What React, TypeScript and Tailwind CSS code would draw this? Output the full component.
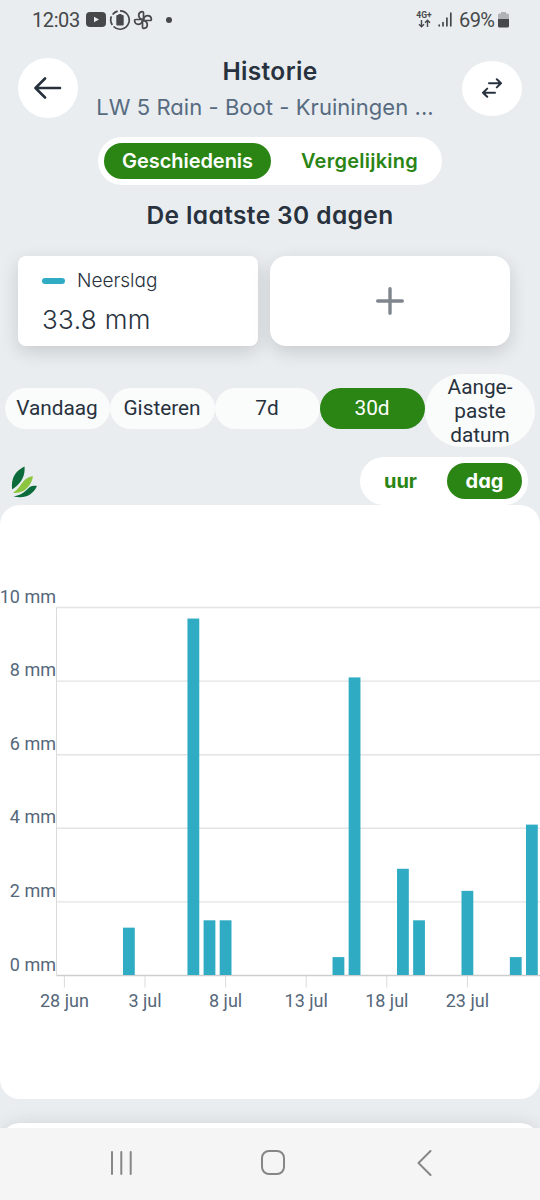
import clsx from "clsx";

const CHART = { left: 56.5, top: 102.5, bottom: 470.5, width: 540, firstDay: 64.4, dayStep: 16.12, barWidth: 11.8 };
const MM = (CHART.bottom - CHART.top) / 10;

// day = days since 28 jun
const RAIN = [
  { day: 4, mm: 1.3 },
  { day: 8, mm: 9.7 },
  { day: 9, mm: 1.5 },
  { day: 10, mm: 1.5 },
  { day: 17, mm: 0.5 },
  { day: 18, mm: 8.1 },
  { day: 21, mm: 2.9 },
  { day: 22, mm: 1.5 },
  { day: 25, mm: 2.3 },
  { day: 28, mm: 0.5 },
  { day: 29, mm: 4.1 },
];

const TICKS = ["28 jun", "3 jul", "8 jul", "13 jul", "18 jul", "23 jul"];

const RANGES = [
  { label: "Vandaag", width: "w-[105px]" },
  { label: "Gisteren", width: "w-[105px]" },
  { label: "7d", width: "w-[105px]" },
  { label: "30d", width: "w-[105px]", active: true },
];

const UI = "font-['Inter',sans-serif] [font-feature-settings:'cv11']";

function StatusBar() {
  return (
    <div className="h-[40px] flex items-center justify-between pl-8 pr-[31px] text-[#464849] font-[Roboto,sans-serif]">
      <div className="flex items-center">
        <span className="text-[20px] w-[48px] mr-[6px] leading-none tracking-[-0.4px]">12:03</span>
        <svg width="20" height="15" viewBox="0 0 20 15">
          <rect width="20" height="15" rx="4" fill="currentColor" />
          <path d="M8 4.7v5.6l5-2.8z" fill="#e9edf0" />
        </svg>
        <svg width="22" height="22" viewBox="0 0 22 22" className="ml-[3px]" fill="none" stroke="currentColor">
          <path d="M11 1.800a9.200 9.200 0 1 1-6.500 15.700" strokeWidth="1.700" />
          <path d="M8.700 2.100A9.200 9.200 0 0 0 3.600 5.500M2.400 7.400a9.200 9.200 0 0 0 .9 8.600" strokeWidth="1.700" />
          <path d="M9.500 5h3v1h1.200a1 1 0 0 1 1 1V15.500a1 1 0 0 1-1 1h-5.400a1 1 0 0 1-1-1V7a1 1 0 0 1 1-1h1.200z" fill="currentColor" stroke="none" />
        </svg>
        <svg width="20" height="20" viewBox="0 0 20 20" className="ml-[2px]" fill="none" stroke="currentColor" strokeWidth="1.700" strokeLinejoin="round">
          {[0, 90, 180, 270].map((deg) => (
            <path key={deg} transform={`rotate(${deg} 10 10)`} d="M10.500 10V3c0-1-.6-1.500-1.500-1.400C6.800 1.900 5.700 3.400 5.700 5.300c0 1.700 1 3.200 2.800 3.900z" />
          ))}
        </svg>
        <span className="ml-[13px] size-[6px] rounded-full bg-[#464849]" />
      </div>
      <div className="flex items-center">
        <div className="flex flex-col items-center w-[18px]">
          <span className="text-[8.5px] leading-[8px] font-bold">4G+</span>
          <svg width="13" height="9" viewBox="0 0 13 9" fill="none" stroke="currentColor" strokeWidth="1.4">
            <path d="M3.500 1v6.500M1 5.200l2.500 2.500L6 5.200M9.500 8V1.500M7 3.800l2.500-2.500L12 3.800" />
          </svg>
        </div>
        <svg width="14" height="15" viewBox="0 0 14 15" className="ml-[5px]" fill="none" stroke="currentColor" strokeWidth="1.7" strokeLinecap="round">
          <path d="M1.200 13v.8M5 10.500v3.300M8.900 6v7.800M12.800 1.200v12.600" />
        </svg>
        <span className="ml-[7px] w-[35px] text-[20px] leading-none tracking-[-0.6px]">69%</span>
        <svg width="11" height="16" viewBox="0 0 11 16" className="ml-[4px]">
          <path d="M3 0h5v1.500h1.500A1.500 1.500 0 0 1 11 3v5H0V3a1.500 1.500 0 0 1 1.500-1.500H3z" fill="#b0b2b3" />
          <path d="M0 7h11v7a1.500 1.500 0 0 1-1.500 1.500h-8A1.500 1.500 0 0 1 0 14z" fill="#464849" />
        </svg>
      </div>
    </div>
  );
}

function Header() {
  return (
    <header className="h-[97px] flex justify-between px-[18px] text-[#28323e]">
      <button className="mt-[18px] size-[60px] rounded-full bg-white flex items-center justify-center">
        <svg width="28" height="22" viewBox="0 0 28 22" fill="none" stroke="currentColor" strokeWidth="2.600" strokeLinecap="round" strokeLinejoin="round">
          <path d="M26 11H2M11 1.500 1.500 11l9.500 9.500" />
        </svg>
      </button>
      <div className={clsx(UI, "pt-[16px] w-[350px] text-center")}>
        <h1 className="text-[24.5px] leading-[30px] font-semibold tracking-[0.35px]">Historie</h1>
        <p className="mt-[5px] -ml-[10px] text-[22px] leading-[32px] text-[#576b80] whitespace-nowrap tracking-[0.05px]">
          LW 5 Rain - Boot - Kruiningen ...
        </p>
      </div>
      <button className="mt-[21px] w-[60px] h-[55px] rounded-[50%] bg-white flex items-center justify-center">
        <svg width="20" height="20" viewBox="0 0 20 20" fill="none" stroke="currentColor" strokeWidth="2" strokeLinecap="round" strokeLinejoin="round">
          <path d="M7 5.300h12M14.800 1.200 19 5.300l-4.200 4.100M13 14.700H1M5.200 10.600 1 14.700l4.200 4.100" />
        </svg>
      </button>
    </header>
  );
}

function Logo() {
  return (
    <svg width="26" height="32" viewBox="0 0 26 32">
      <path d="M13.500.5C5 4.500-.5 12 1.200 23.500 9 18 14.500 11.500 13.500.5z" fill="#0b6b3a" />
      <path d="M22 10.300C11 11.500 12 20 2 26.800 13 28.500 20.500 19.500 22 10.300z" fill="#8cc540" />
      <path d="M26 20c-5-1.200-8 1-11 4.500-3 3.200-7 4.700-12.500 6C13.500 33 21.500 29.500 26 20z" fill="#0b6b3a" />
    </svg>
  );
}

function RainChart() {
  return (
    <svg width="540" height="594" viewBox="0 0 540 594" className="block font-[Roboto,sans-serif] text-[18px]">
      {[10, 8, 6, 4, 2, 0].map((mm) => {
        const y = CHART.bottom - mm * MM;
        return (
          <g key={mm}>
            <path d={`M${CHART.left} ${y}H${CHART.width}`} stroke={mm ? "#e3e4e5" : "#cbcdcf"} strokeWidth="1.400" />
            <text x="56" y={y - 5} textAnchor="end" fill="#55677a">
              {mm} mm
            </text>
          </g>
        );
      })}
      <path d={`M${CHART.left} ${CHART.top}V${CHART.bottom}`} stroke="#d9dbdc" />
      {TICKS.map((label, i) => {
        const x = CHART.firstDay + i * 5 * CHART.dayStep;
        return (
          <g key={label}>
            <path d={`M${x} ${CHART.bottom}v12`} stroke="#d9dbdc" />
            <text x={x} y="502" textAnchor="middle" fill="#55677a">
              {label}
            </text>
          </g>
        );
      })}
      {RAIN.map(({ day, mm }) => (
        <rect
          key={day}
          x={CHART.firstDay + day * CHART.dayStep - CHART.barWidth / 2}
          y={CHART.bottom - mm * MM}
          width={CHART.barWidth}
          height={mm * MM - 0.5}
          fill="#2fabc3"
        />
      ))}
    </svg>
  );
}

function NavBar() {
  return (
    <nav className="h-[72px] shrink-0 bg-[#f5f5f5] flex items-center justify-between pl-[110px] pr-[108px] pb-[3px] text-[#868686]">
      <svg width="23" height="24" viewBox="0 0 23 24" fill="none" stroke="currentColor" strokeWidth="2" strokeLinecap="round">
        <path d="M2 1v22M11.300 1v22M20.700 1v22" />
      </svg>
      <svg width="24" height="25" viewBox="0 0 24 25" className="-ml-[5px]" fill="none" stroke="currentColor" strokeWidth="2">
        <rect x="1" y="1" width="22" height="23" rx="7" />
      </svg>
      <svg width="15" height="26" viewBox="0 0 15 26" fill="none" stroke="currentColor" strokeWidth="2" strokeLinecap="round" strokeLinejoin="round">
        <path d="M13.500 1 1.500 13l12 12" />
      </svg>
    </nav>
  );
}

export default function App() {
  return (
    <div className="w-[540px] h-[1200px] bg-[#e9edf0] overflow-hidden flex flex-col">
      <StatusBar />
      <Header />

      <div className={clsx(UI, "w-[344px] h-[48px] shrink-0 ml-[98px] p-[6px] rounded-full bg-white flex text-[20px] font-semibold")}>
        <button className="w-[167px] rounded-full bg-[#2a8515] text-white tracking-[-0.05px]">Geschiedenis</button>
        <button className="flex-1 text-[#2a8515] pl-[12px] tracking-[0.25px]">Vergelijking</button>
      </div>
      <h2 className={clsx(UI, "mt-[14px] h-[32px] leading-[32px] text-center text-[24.5px] font-semibold text-[#28323e] tracking-[0.4px]")}>
        De laatste 30 dagen
      </h2>

      <div className={clsx(UI, "mt-[25.5px] px-[18px] flex gap-[12px] shrink-0 text-[#28323e]")}>
        <div className="w-[240px] h-[90px] rounded-[8px] bg-white shadow-[0_6px_18px_rgba(0,0,0,0.14)] px-[24px] pt-[11px]">
          <div className="flex items-center h-[28px] gap-[12px]">
            <span className="w-[23px] h-[6px] rounded-full bg-[#2fabc3]" />
            <span className="text-[19px] font-[350]">Neerslag</span>
          </div>
          <div className="mt-[8px] text-[26px] leading-[34px] font-[350] tracking-[0.35px]">33.8 mm</div>
        </div>
        <button className="w-[240px] h-[90px] rounded-[16px] bg-white shadow-[0_6px_18px_rgba(0,0,0,0.14)] flex items-center justify-center">
          <svg width="28" height="28" viewBox="0 0 28 28" fill="none" stroke="#80868d" strokeWidth="3.400" strokeLinecap="round">
            <path d="M14 1.700v24.600M1.700 14h24.600" />
          </svg>
        </button>
      </div>

      <div className="mt-[28px] h-[73px] shrink-0 pl-[5px] flex items-center pb-[5px] font-[Roboto,sans-serif] text-[20.8px] text-[#28323e]">
        {RANGES.map((r) => (
          <button
            key={r.label}
            className={clsx(r.width, "h-[41px] rounded-full leading-none pr-[1px]", r.active ? "bg-[#2a8515] text-white" : "bg-[#fafbfb]")}
          >
            {r.label}
          </button>
        ))}
        <button className="w-[110px] h-[73px] mt-[5px] rounded-[37px] bg-[#fafbfb] leading-[24px]">
          Aange-
          <br />
          paste
          <br />
          datum
        </button>
      </div>

      <div className="mt-[10px] h-[48px] shrink-0 pl-[11px] pr-[12px] flex justify-between">
        <div className="pt-[9px]">
          <Logo />
        </div>
        <div className={clsx(UI, "w-[168px] h-[48px] p-[6px] rounded-full bg-white flex text-[20px] font-bold")}>
          <button className="flex-1 text-[#2a8515] pr-[12px]">uur</button>
          <button className="w-[75px] rounded-full bg-[#2a8515] text-white">dag</button>
        </div>
      </div>

      <section className="h-[594px] shrink-0 rounded-[20px] bg-white overflow-hidden">
        <RainChart />
      </section>
      <div className="h-[29px] shrink-0 pt-[24px] overflow-hidden">
        <div className="h-[40px] rounded-[20px] bg-white shadow-[0_0_18px_rgba(0,0,0,0.1)]" />
      </div>
      <NavBar />
    </div>
  );
}
